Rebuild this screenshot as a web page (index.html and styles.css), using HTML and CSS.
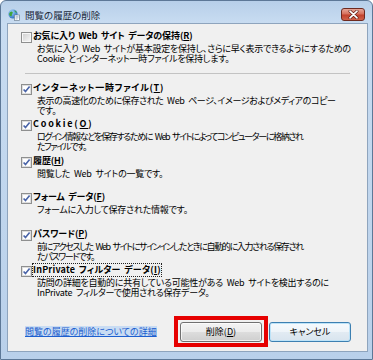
FILE: index.html
```html
<!DOCTYPE html>
<html lang="ja">
<head>
<meta charset="utf-8">
<title>閲覧の履歴の削除</title>
<link rel="stylesheet" href="styles.css">
</head>
<body>
<div class="window">
  <div class="titlebar">
    <svg class="appicon" width="12" height="12" viewBox="0 0 12 12">
      <defs>
        <radialGradient id="g" cx="0.35" cy="0.3" r="0.8">
          <stop offset="0" stop-color="#9fd6ff"/>
          <stop offset="1" stop-color="#1f62b8"/>
        </radialGradient>
      </defs>
      <circle cx="5" cy="5" r="4.6" fill="url(#g)"/>
      <path d="M2 3.2 C3 2 4.5 2.2 4.8 3.4 C5 4.6 3.6 4.8 3.8 6.2 C3.9 7.4 2.6 7.6 1.6 6.4 C0.8 5.2 1.2 4 2 3.2 Z" fill="#3fa53a"/>
      <path d="M6.2 1.4 C7.6 1.6 8.6 2.6 8.8 3.8 C7.8 3.6 7 3 6.2 1.4 Z" fill="#3fa53a"/>
      <rect x="6.5" y="6" width="5" height="5.6" fill="#ffffff" stroke="#6b7f95" stroke-width="0.7"/>
      <path d="M7.5 7.6 H10.5 M7.5 8.8 H10.5 M7.5 10 H9.5" stroke="#7f97b3" stroke-width="0.6"/>
    </svg>
    <span class="title">閲覧の履歴の削除</span>
    <div class="close">
      <svg width="11" height="9" viewBox="0 0 11 9">
        <path d="M2 1.2 L9 7.8 M9 1.2 L2 7.8" stroke="#5a1a12" stroke-width="3" stroke-linecap="round"/>
        <path d="M2 1.2 L9 7.8 M9 1.2 L2 7.8" stroke="#ffffff" stroke-width="1.7" stroke-linecap="round"/>
      </svg>
    </div>
  </div>

  <div class="content">
    <div class="item first">
      <div class="row">
        <svg class="cb" width="11" height="11" viewBox="0 0 11 11">
          <defs>
            <linearGradient id="ub" x1="0" y1="0" x2="1" y2="1">
              <stop offset="0" stop-color="#d2d2d2"/>
              <stop offset="1" stop-color="#f4f4f4"/>
            </linearGradient>
          </defs>
          <rect x="0.5" y="0.5" width="10" height="10" fill="#f7f7f7" stroke="#8e8f8f"/>
          <rect x="2" y="2" width="7" height="7" fill="url(#ub)"/>
        </svg>
        <span class="label">お気に入り Web サイト データの保持(<u>R</u>)</span>
      </div>
      <div class="desc">
        <span class="line">お気に入り Web サイトが基本設定を保持し、さらに早く表示できるようにするための</span>
        <span class="line">Cookie とインターネット一時ファイルを保持します。</span>
      </div>
    </div>

    <div class="sep"></div>

    <div class="item">
      <div class="row">
        <svg class="cb" width="11" height="11" viewBox="0 0 11 11"><rect x="0.5" y="0.5" width="10" height="10" fill="#f4f4f4" stroke="#8e8f8f"/><rect x="1.5" y="1.5" width="8" height="8" fill="#ffffff" stroke="#dedede"/><path d="M2.6 5.4 L4.5 7.6 L8.6 2.4" fill="none" stroke="#4a64a8" stroke-width="1.6"/></svg>
        <span class="label wide">インターネット一時ファイル(<u>T</u>)</span>
      </div>
      <div class="desc">
        <span class="line snug">表示の高速化のために保存された Web ページ、イメージおよびメディアのコピー</span>
        <span class="line">です。</span>
      </div>
    </div>

    <div class="item">
      <div class="row">
        <svg class="cb" width="11" height="11" viewBox="0 0 11 11"><rect x="0.5" y="0.5" width="10" height="10" fill="#f4f4f4" stroke="#8e8f8f"/><rect x="1.5" y="1.5" width="8" height="8" fill="#ffffff" stroke="#dedede"/><path d="M2.6 5.4 L4.5 7.6 L8.6 2.4" fill="none" stroke="#4a64a8" stroke-width="1.6"/></svg>
        <span class="label latin">Cookie(<u>O</u>)</span>
      </div>
      <div class="desc">
        <span class="line tight">ログイン情報などを保存するために Web サイトによってコンピューターに格納され</span>
        <span class="line tight">たファイルです。</span>
      </div>
    </div>

    <div class="item">
      <div class="row">
        <svg class="cb" width="11" height="11" viewBox="0 0 11 11"><rect x="0.5" y="0.5" width="10" height="10" fill="#f4f4f4" stroke="#8e8f8f"/><rect x="1.5" y="1.5" width="8" height="8" fill="#ffffff" stroke="#dedede"/><path d="M2.6 5.4 L4.5 7.6 L8.6 2.4" fill="none" stroke="#4a64a8" stroke-width="1.6"/></svg>
        <span class="label">履歴(<u>H</u>)</span>
      </div>
      <div class="desc">
        <span class="line">閲覧した Web サイトの一覧です。</span>
      </div>
    </div>

    <div class="item">
      <div class="row">
        <svg class="cb" width="11" height="11" viewBox="0 0 11 11"><rect x="0.5" y="0.5" width="10" height="10" fill="#f4f4f4" stroke="#8e8f8f"/><rect x="1.5" y="1.5" width="8" height="8" fill="#ffffff" stroke="#dedede"/><path d="M2.6 5.4 L4.5 7.6 L8.6 2.4" fill="none" stroke="#4a64a8" stroke-width="1.6"/></svg>
        <span class="label">フォーム データ(<u>F</u>)</span>
      </div>
      <div class="desc">
        <span class="line">フォームに入力して保存された情報です。</span>
      </div>
    </div>

    <div class="item">
      <div class="row">
        <svg class="cb" width="11" height="11" viewBox="0 0 11 11"><rect x="0.5" y="0.5" width="10" height="10" fill="#f4f4f4" stroke="#8e8f8f"/><rect x="1.5" y="1.5" width="8" height="8" fill="#ffffff" stroke="#dedede"/><path d="M2.6 5.4 L4.5 7.6 L8.6 2.4" fill="none" stroke="#4a64a8" stroke-width="1.6"/></svg>
        <span class="label">パスワード(<u>P</u>)</span>
      </div>
      <div class="desc">
        <span class="line tight">前にアクセスした Web サイトにサインインしたときに自動的に入力される保存され</span>
        <span class="line tight">たパスワードです。</span>
      </div>
    </div>

    <div class="item">
      <div class="row">
        <svg class="cb" width="11" height="11" viewBox="0 0 11 11"><rect x="0.5" y="0.5" width="10" height="10" fill="#f4f4f4" stroke="#8e8f8f"/><rect x="1.5" y="1.5" width="8" height="8" fill="#ffffff" stroke="#dedede"/><path d="M2.6 5.4 L4.5 7.6 L8.6 2.4" fill="none" stroke="#4a64a8" stroke-width="1.6"/></svg>
        <span class="label focus">InPrivate フィルター データ(<u>I</u>)</span>
      </div>
      <div class="desc">
        <span class="line">訪問の詳細を自動的に共有している可能性がある Web サイトを検出するのに</span>
        <span class="line">InPrivate フィルターで使用される保存データ。</span>
      </div>
    </div>

    <div class="footer">
      <a class="link" href="#">閲覧の履歴の削除についての詳細</a>
      <div class="hl">
        <div class="btn">削除(<u>D</u>)</div>
      </div>
      <div class="btn default">キャンセル</div>
    </div>
  </div>
</div>
</body>
</html>
```

FILE: styles.css
```css
html, body {
  margin: 0;
  padding: 0;
}

body {
  width: 373px;
  height: 360px;
  overflow: hidden;
  font-family: "Noto Sans CJK JP", "Noto Sans", sans-serif;
  font-size: 9px;
  font-feature-settings: "palt";
  color: #000;
  background: #ffffff;
}

.window {
  box-sizing: border-box;
  width: 373px;
  height: 360px;
  display: flex;
  flex-direction: column;
  background: linear-gradient(#b7cfe9 0, #c8dcf1 22px, #b9d0ea 100%);
  border: 1px solid #5d7897;
  border-radius: 6px 6px 0 0;
  padding: 0 4px 7px 6px;
}

.titlebar {
  box-sizing: border-box;
  height: 22px;
  padding-top: 5px;
  display: flex;
  align-items: center;
}

.appicon {
  flex: none;
  margin-left: 1px;
}

.title {
  margin-left: 5px;
  color: #1b2a3c;
  font-size: 9.5px;
  line-height: 12px;
}

.close {
  margin-left: auto;
  margin-right: 3px;
  box-sizing: border-box;
  width: 24px;
  height: 13px;
  border: 1px solid #6e2a1f;
  border-radius: 3px;
  background: linear-gradient(#e7a698 0, #d6705c 45%, #c2412c 55%, #d0614a 100%);
  display: flex;
  align-items: center;
  justify-content: center;
}

.content {
  flex: 1;
  display: flex;
  flex-direction: column;
  background: #f0f0f0;
  border: 1px solid #8ea4bd;
  padding: 6px 16px 4px 13px;
}

.item {
  height: 36.4px;
  flex: none;
}

.item.first {
  height: auto;
}

.row {
  display: flex;
  align-items: flex-start;
  line-height: 12px;
  white-space: nowrap;
}

.cb {
  flex: none;
  margin-top: 2px;
  margin-right: 1px;
}

.label {
  font-weight: bold;
  letter-spacing: -0.1px;
  word-spacing: 1.5px;
}

.label.wide {
  letter-spacing: 0.7px;
}

.label.latin {
  letter-spacing: 1.8px;
}

.label.focus {
  outline: 1px dotted #222;
  outline-offset: 0;
  letter-spacing: 0.2px;
}

.desc {
  display: flex;
  flex-direction: column;
  align-items: flex-start;
  margin-left: 16px;
  margin-top: 1px;
  line-height: 10px;
  white-space: nowrap;
  letter-spacing: -0.25px;
  word-spacing: 2px;
}

.line {
  height: 10px;
}

.line.snug {
  letter-spacing: -0.38px;
}

.line.tight {
  letter-spacing: -1.35px;
}

.sep {
  height: 0;
  border-top: 1px solid #c3c3c3;
  margin: 9px 1px 8px 4px;
}

.footer {
  margin-top: auto;
  display: flex;
  align-items: center;
}

.link {
  margin-left: 4px;
  color: #1d5fcf;
  background: #c9dcf3;
  text-decoration: underline;
  line-height: 11px;
}

.hl {
  margin-left: auto;
  margin-right: 1px;
  border: 4px solid #e60000;
  padding: 2px 2px 1px 2px;
}

.btn {
  box-sizing: border-box;
  width: 82px;
  height: 20px;
  border: 1px solid #707070;
  border-radius: 3px;
  background: linear-gradient(#f3f3f3 0, #ebebeb 50%, #dddddd 50%, #cfcfcf 100%);
  box-shadow: inset 0 0 0 1px rgba(255, 255, 255, 0.7);
  display: flex;
  align-items: center;
  justify-content: center;
  line-height: 12px;
}

.btn.default {
  border-color: #3c7fb1;
  background: linear-gradient(#f6fafd 0, #eef4f9 50%, #e2ebf3 50%, #d8e4ee 100%);
  box-shadow: inset 0 0 0 1px #bde3f8;
}
```
